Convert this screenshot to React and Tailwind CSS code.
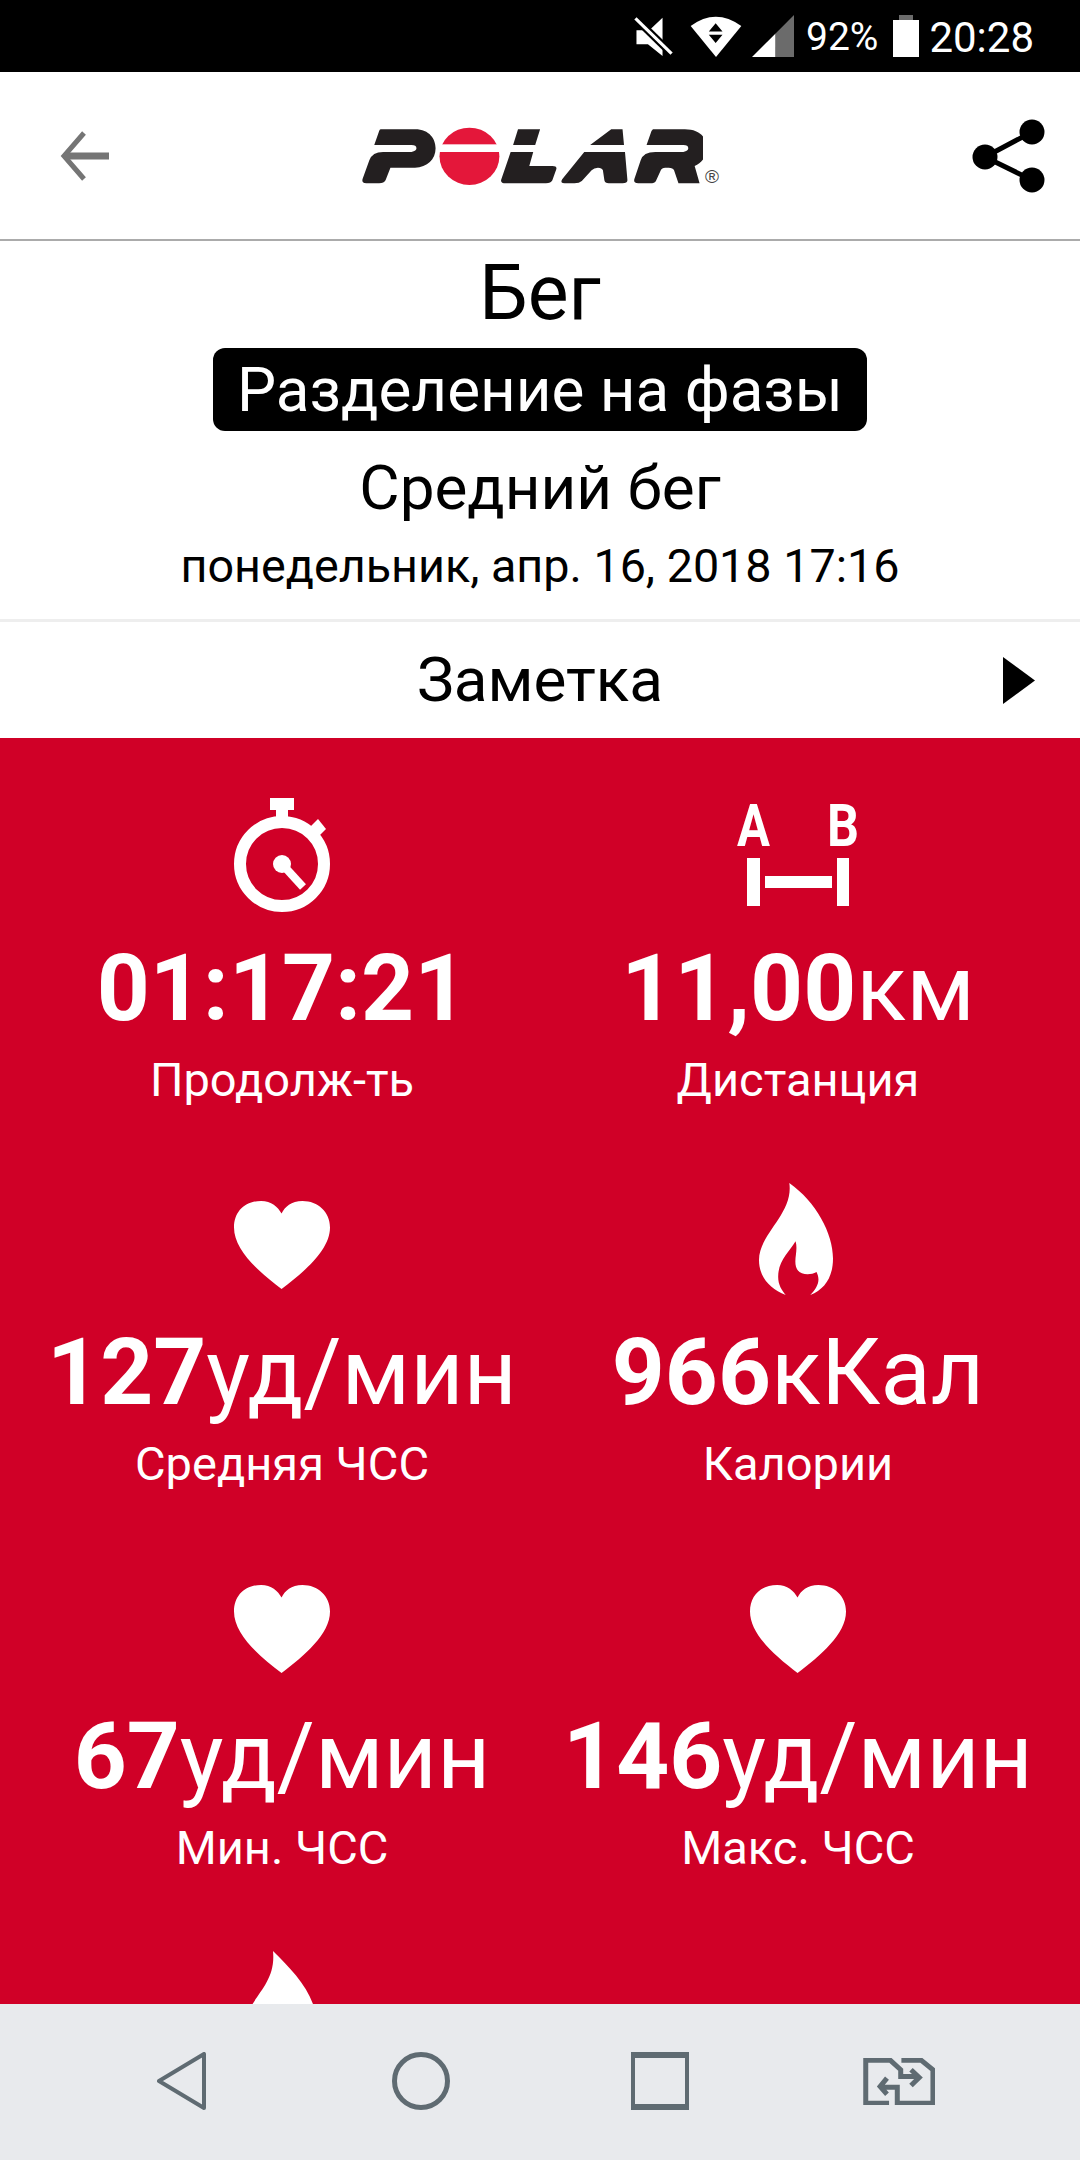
const metrics = [
  { icon: 'watch', value: '01:17:21', unit: '', label: 'Продолж-ть' },
  { icon: 'ab', value: '11,00', unit: 'км', label: 'Дистанция' },
  { icon: 'heart', value: '127', unit: 'уд/мин', label: 'Средняя ЧСС' },
  { icon: 'flame', value: '966', unit: 'кКал', label: 'Калории' },
  { icon: 'heart', value: '67', unit: 'уд/мин', label: 'Мин. ЧСС' },
  { icon: 'heart', value: '146', unit: 'уд/мин', label: 'Макс. ЧСС' },
  { icon: 'drop', value: '', unit: '', label: '' },
];

function StatusBar() {
  return (
    <div className="h-[72px] shrink-0 bg-black flex items-center justify-end pr-[46px] text-white font-['Roboto',sans-serif]">
      {/* mute */}
      <svg width="41" height="40" viewBox="265 45 118 120" preserveAspectRatio="none" className="mb-[1px]">
        <path d="M275 88H312L350 50V165L308 130H275Z" fill="#fff" />
        <path d="M272 52L376 158" stroke="#000" strokeWidth="22" />
        <path d="M272 52L376 158" stroke="#fff" strokeWidth="9" />
      </svg>
      {/* wifi */}
      <svg width="52" height="42" viewBox="435 45 152 127" preserveAspectRatio="none" className="ml-[16px]">
        <path d="M437 78Q510 22 585 78L511 172Z" fill="#fff" />
        <path d="M510 70L490 95H530ZM490 105H530L510 130Z" fill="#000" />
      </svg>
      {/* signal */}
      <svg width="42" height="42" viewBox="617 45 121 125" preserveAspectRatio="none" className="ml-[10px]">
        <path d="M617 170L685 100V170Z" fill="#fff" />
        <path d="M685 100L738 45V170H685Z" fill="#6b6b6b" />
      </svg>
      <span className="ml-[12px] mt-[3px] text-[39px] leading-none">92%</span>
      {/* battery */}
      <svg width="26" height="42" viewBox="0 0 26 42" className="ml-[15px]">
        <rect x="6" y="0" width="14" height="5" fill="#6b6b6b" />
        <rect x="0" y="5" width="26" height="37" fill="#fff" />
      </svg>
      <span className="ml-[10px] mt-[3px] text-[42px] leading-none">20:28</span>
    </div>
  );
}

function Logo() {
  return (
    <div className="flex items-end">
      <svg width="342" height="62" viewBox="745 168 697 186" preserveAspectRatio="none">
        <path fill="#231f20" d="M785 175H855C885 175 897 205 897 232C897 265 880 290 855 290H805L795 328Q792 337 782 337H756Q746 337 748 325L762 268Q768 243 790 243H848Q858 240 858 232Q858 222 848 222H772L782 180Q783 175 785 175Z" />
        <ellipse cx="966" cy="256" rx="61" ry="86" fill="#e4173a" />
        <rect x="900" y="220" width="132" height="23" fill="#fff" />
        <path fill="#231f20" d="M1065 175H1110L1100 222H1055ZM1050 243H1096L1088 285H1135Q1145 285 1143 295L1135 328Q1132 337 1122 337H1040Q1028 337 1031 325Z" />
        <path fill="#231f20" d="M1255 175H1278L1281 222H1212ZM1200 243H1283L1288 328Q1288 337 1278 337H1250Q1242 337 1241 328L1238 298Q1236 290 1228 290Q1220 290 1215 298L1195 330Q1190 337 1180 337H1160Q1150 337 1155 325Z" />
        <path fill="#231f20" d="M1340 175H1405C1435 175 1450 200 1450 232C1450 255 1440 275 1425 285L1435 337H1392L1383 298Q1381 290 1372 290H1365Q1358 290 1356 298L1346 330Q1344 337 1334 337H1310Q1300 337 1302 325L1315 268Q1320 243 1345 243H1402Q1412 240 1412 232Q1412 222 1402 222H1327L1337 180Z" />
      </svg>
      <span className="ml-[2px] mb-[3px] text-[19px] leading-none text-[#444] font-['Liberation_Sans',sans-serif]">®</span>
    </div>
  );
}

function Header() {
  return (
    <div className="h-[169px] shrink-0 bg-white border-b-2 border-[#ababab] flex items-center pl-[60px] pr-[34px]">
      <svg width="50" height="50" viewBox="0 0 50 50" fill="none" stroke="#757575" strokeWidth="6">
        <path d="M24 2L4 25L24 48" strokeWidth="5" />
        <path d="M4 25H49" strokeWidth="7" />
      </svg>
      <div className="ml-[251px] mt-[5px]">
        <Logo />
      </div>
      <svg width="74" height="74" viewBox="0 0 74 74" className="ml-auto mt-[1px]">
        <path d="M60 13L13 38L60 61" stroke="#000" strokeWidth="5" fill="none" />
        <circle cx="60" cy="13" r="12.5" />
        <circle cx="13" cy="38" r="12.5" />
        <circle cx="60" cy="61" r="12.5" />
      </svg>
    </div>
  );
}

function Summary() {
  return (
    <div className="shrink-0 bg-white flex flex-col items-center pt-[12px] pb-[27px] border-b-[3px] border-[#eeeeee] text-black">
      <div className="text-[77px] leading-[80px]">Бег</div>
      <div className="mt-[15px] h-[83px] px-[24px] rounded-[12px] bg-black text-white text-[62px] leading-[83px] whitespace-nowrap">Разделение на фазы</div>
      <div className="mt-[25px] text-[62px] leading-[64px]">Средний бег</div>
      <div className="mt-[20px] text-[46.7px] leading-[52px] whitespace-nowrap">понедельник, апр. 16, 2018 17:16</div>
    </div>
  );
}

function NoteRow() {
  return (
    <div className="h-[116px] shrink-0 bg-white grid grid-cols-[1fr_auto_1fr] items-center text-black">
      <div />
      <div className="text-[62px] leading-none">Заметка</div>
      <svg width="32" height="47" viewBox="0 0 32 47" className="justify-self-end mr-[45px]">
        <path d="M0 0L32 23.5L0 47Z" />
      </svg>
    </div>
  );
}

function MetricIcon({ name }) {
  if (name === 'watch') {
    return (
      <svg width="96" height="114" viewBox="0 0 96 114" fill="#fff">
        <rect x="36" y="0" width="24" height="12" />
        <rect x="42" y="10" width="12" height="10" />
        <path d="M76 29L84 21L92 31L84 39Z" />
        <circle cx="48" cy="66" r="42" fill="none" stroke="#fff" strokeWidth="12" />
        <circle cx="48" cy="66" r="9" />
        <path d="M48 66L69 89" stroke="#fff" strokeWidth="8" />
      </svg>
    );
  }
  if (name === 'ab') {
    return (
      <svg width="130" height="122" viewBox="0 -20 130 122" fill="#fff" className="-mt-[20px] -mr-[8px]">
        <text x="0" y="42" fontSize="59" fontWeight="700" fontFamily="Roboto, sans-serif" textLength="33" lengthAdjust="spacingAndGlyphs">A</text>
        <text x="90" y="42" fontSize="59" fontWeight="700" fontFamily="Roboto, sans-serif" textLength="32" lengthAdjust="spacingAndGlyphs">B</text>
        <rect x="10" y="54" width="13" height="48" />
        <rect x="28" y="72" width="67" height="12" />
        <rect x="100" y="54" width="12" height="48" />
      </svg>
    );
  }
  if (name === 'heart') {
    return (
      <svg width="96" height="88" viewBox="76 92 216 266" preserveAspectRatio="none" className="mt-[12px]" fill="#fff">
        <path d="M183 130C190 110 205 92 230 92C265 92 292 125 292 172C292 240 235 305 183 358C131 305 76 240 76 172C76 125 100 92 137 92C160 92 175 110 183 130Z" />
      </svg>
    );
  }
  if (name === 'flame') {
    return (
      <svg width="74" height="112" viewBox="1252 38 166 337" preserveAspectRatio="none" className="mr-[4px]" fill="#fff">
        <path d="M1320 38C1380 95 1418 190 1418 265C1418 320 1400 358 1367 375C1385 350 1390 330 1381 306C1365 318 1340 315 1335 290C1330 265 1340 240 1334 213C1320 245 1295 270 1295 320C1295 345 1303 360 1312 375C1275 355 1252 320 1252 270C1252 190 1330 130 1320 38Z" />
      </svg>
    );
  }
  return (
    <svg width="96" height="112" viewBox="0 0 96 112" fill="#fff">
      <path d="M39 0C56 17 73 34 80 56C88 80 80 112 48 112C15 112 5 85 14 62C22 42 42 30 39 0Z" />
    </svg>
  );
}

function Metric({ icon, value, unit, label }) {
  return (
    <div className="flex flex-col items-center text-white">
      <div className="h-[150px] flex items-center justify-center">
        <MetricIcon name={icon} />
      </div>
      {value && (
        <>
          <div className="mt-[9px] text-[92.5px] leading-[100px] whitespace-nowrap">
            <span className="font-bold">{value}</span>
            {unit}
          </div>
          <div className="mt-[11px] text-[47px] leading-[60px]">{label}</div>
        </>
      )}
    </div>
  );
}

function MetricsGrid() {
  return (
    <div className="flex-1 min-h-0 overflow-hidden bg-[#d00027] px-6 pt-[42px]">
      <div className="grid grid-cols-2 auto-rows-[384px]">
        {metrics.map((m, i) => (
          <Metric key={i} {...m} />
        ))}
      </div>
    </div>
  );
}

function NavBar() {
  return (
    <div className="h-[156px] shrink-0 bg-[#e8eaed] grid grid-cols-4 items-center px-[62px] pb-[2px]">
      <svg width="50" height="58" viewBox="0 0 50 58" fill="none" stroke="#5f6b72" strokeWidth="4" strokeLinejoin="round" className="justify-self-center">
        <path d="M47 2V56L2 29Z" />
      </svg>
      <svg width="58" height="58" viewBox="0 0 58 58" fill="none" stroke="#5f6b72" strokeWidth="5" className="justify-self-center">
        <circle cx="29" cy="29" r="26.5" />
      </svg>
      <svg width="58" height="58" viewBox="0 0 58 58" fill="none" stroke="#5f6b72" strokeWidth="4" className="justify-self-center">
        <rect x="2" y="2" width="54" height="54" />
        <path d="M0 3H58M0 55H58" strokeWidth="6" />
      </svg>
      <svg width="72" height="47" viewBox="1250 385 105 140" preserveAspectRatio="none" fill="none" stroke="#5f6b72" className="justify-self-center">
        <path vectorEffect="non-scaling-stroke" strokeWidth="5" d="M1288 520H1254V392H1290L1305 420V440H1330M1320 420L1332 443L1320 467" />
        <path vectorEffect="non-scaling-stroke" strokeWidth="5" d="M1306 392H1335L1352 420V520H1300V472H1275M1285 445L1275 470L1285 493" />
      </svg>
    </div>
  );
}

export default function App() {
  return (
    <div className="w-[1080px] h-[2160px] flex flex-col overflow-hidden font-['Roboto',sans-serif]">
      <StatusBar />
      <Header />
      <Summary />
      <NoteRow />
      <MetricsGrid />
      <NavBar />
    </div>
  );
}
